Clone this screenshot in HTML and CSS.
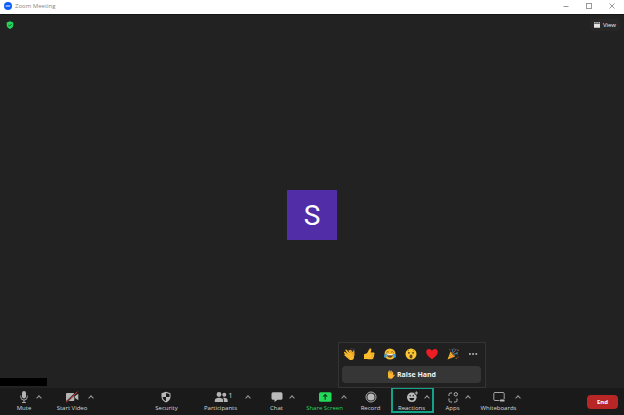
FILE: index.html
```html
<!DOCTYPE html>
<html lang="en">
<head>
<meta charset="utf-8">
<title>Zoom Meeting</title>
<link rel="stylesheet" href="styles.css">
</head>
<body>
<header class="titlebar">
  <svg class="logo" viewBox="0 0 8 8"><circle cx="4" cy="4" r="4" fill="#0b5cff"/><rect x="1.5" y="3.2" width="5" height="1.5" rx=".6" fill="#a9c5ff"/></svg>
  <h1 class="title">Zoom Meeting</h1>
  <div class="window-controls">
    <button aria-label="Minimize"><svg viewBox="0 0 8 8"><path d="M1.5 4.5h5"/></svg></button>
    <button aria-label="Maximize"><svg viewBox="0 0 8 8"><rect x="1.5" y="1.5" width="5" height="5"/></svg></button>
    <button aria-label="Close"><svg viewBox="0 0 8 8"><path d="M1.5 1.5l5 5M6.500 1.500l-5 5"/></svg></button>
  </div>
</header>
<main class="stage">
  <div class="stage-top">
    <svg class="shield" viewBox="0 0 8 8"><path d="M4 .3L7.300 1.400V4C7.300 6 5.800 7.200 4 7.900 2.200 7.200.7 6 .7 4V1.400z" fill="#23d959"/><path d="M2.300 4l1.200 1.200 2.200-2.300" fill="none" stroke="#173d22" stroke-width=".9"/></svg>
    <button class="view"><svg viewBox="0 0 6 6"><path d="M0 .3h1.600v1.300H0zM2.200.3h1.600v1.300H2.200zM4.400.3H6v1.300H4.400zM0 2.100h6v3.600H0z" fill="#e4e4e4"/></svg>View</button>
  </div>
  <div class="avatar">S</div>
  <div class="name-tag"></div>
</main>
<footer class="toolbar">
  <div class="group">
    <div class="item w48"><button class="tool"><svg viewBox="0 0 14 12"><rect x="5" y="0" width="4" height="7.500" rx="2" fill="#b4b4b4"/><path d="M3.700 4.500v1.300a3.300 3.300 0 0 0 6.600 0V4.500M7 9v2.500M5 11.500h4" fill="none" stroke="#b4b4b4" stroke-width=".9"/></svg>Mute</button><button class="caret near" aria-label="Audio options"></button></div>
    <div class="item w48"><button class="tool"><svg viewBox="0 0 14 12"><rect x="1" y="2" width="8.300" height="8" rx="1" fill="#b4b4b4"/><path d="M10 5l3.300-2.300v6.600L10 7z" fill="#b4b4b4"/><path d="M1 11.300L12.500.7" stroke="#1a1a1a" stroke-width="1.600"/><path d="M1 11.300L12.500.7" stroke="#e0443e" stroke-width=".9"/></svg>Start Video</button><button class="caret far" aria-label="Video options"></button></div>
  </div>
  <div class="group">
    <div class="item w50"><button class="tool"><svg viewBox="0 0 14 12"><path d="M7 .7l4.500 1.600v3.500c0 2.700-2 4.600-4.500 5.700-2.500-1.100-4.500-3-4.500-5.700V2.300z" fill="#b9b9b9"/><path d="M7 2v4h3.500V3.100zM7 6v4.300C5.200 9.300 3.700 7.900 3.500 6z" fill="#1a1a1a"/></svg>Security</button></div>
    <div class="item w58"><button class="tool"><svg viewBox="0 0 14 12"><circle cx="5" cy="3.500" r="2.400" fill="#b4b4b4"/><path d="M.8 11V9.500C.8 7.500 2.500 6.700 5 6.700s4.200.8 4.200 2.800V11z" fill="#b4b4b4"/><circle cx="10.300" cy="3.800" r="2" fill="#b4b4b4"/><path d="M9 6.800c2.600-.4 4.700.4 4.700 2.700V11H10V9.500C10 8.300 9.700 7.400 9 6.800z" fill="#b4b4b4"/></svg>Participants</button><span class="count">1</span><button class="caret wide" aria-label="Participant options"></button></div>
    <div class="item w54"><button class="tool"><svg viewBox="0 0 14 12"><path d="M3 1.300h8a1.500 1.500 0 0 1 1.500 1.500v4.400A1.500 1.500 0 0 1 11 8.700H7.500L4.500 11V8.700H3a1.500 1.500 0 0 1-1.500-1.500V2.800A1.500 1.500 0 0 1 3 1.300z" fill="#b9b9b9"/></svg>Chat</button><button class="caret near" aria-label="Chat options"></button></div>
    <div class="item w42"><button class="tool share"><svg viewBox="0 0 14 12"><rect x="1" y="1.300" width="12.500" height="9.500" rx="1.500" fill="#23d959"/><path d="M7.200 8.800V4M5.200 5.700l2-2 2 2" fill="none" stroke="#153b1e" stroke-width="1.200"/></svg>Share Screen</button><button class="caret far" aria-label="Share options"></button></div>
    <div class="item w50"><button class="tool"><svg viewBox="0 0 14 12"><circle cx="7" cy="6" r="5" fill="none" stroke="#b9b9b9" stroke-width=".9"/><circle cx="7" cy="6" r="3.600" fill="#b9b9b9"/></svg>Record</button></div>
    <div class="item w32"><button class="tool"><svg viewBox="0 0 14 12"><circle cx="6.800" cy="6.300" r="4.800" fill="#b9b9b9"/><path d="M4.300 7h5a2.500 2.500 0 0 1-5 0z" fill="#1a1a1a"/><circle cx="5.200" cy="4.800" r=".7" fill="#1a1a1a"/><circle cx="8.300" cy="4.800" r=".7" fill="#1a1a1a"/><circle cx="11.300" cy="2" r="2.100" fill="#1a1a1a"/><path d="M11.300.3v3.400M9.600 2H13" stroke="#b9b9b9" stroke-width=".9"/></svg>Reactions</button><button class="caret near" aria-label="Reaction options"></button>
      <div class="highlight"></div>
      <section class="popup" aria-label="Reactions">
        <div class="emojis">
          <button aria-label="Clap"><svg viewBox="0 0 12 12"><path d="M1 4.200c.5-.7 1.100-.3 1.500.1L4.700 6 2.400 2.500c-.4-.8.5-1.500 1.200-.7l3.200 3.500-1.300-2.500c-.3-.9.700-1.200 1.200-.5l3.500 4.500c1.700 2.300.7 4.700-1.400 5.100-1.700.3-3-.5-4-1.700L1.500 7.600c-.5-.7.1-1.300.8-.9L1.200 5.300C.9 4.900.7 4.600 1 4.200z" fill="#f8b92d"/><path d="M6.500 1.900l1.300-.2 2.300 2.500.1-1.700c.3-.7 1.200-.3 1.200.4l.2 4.300-1 1.700-.8-2z" fill="#f0a52a"/><path d="M3.500 5l2.400 2.300" stroke="#d88d20" stroke-width=".4"/><path d="M8.200 1.300l.2-1M9.500 1.500l.8-1M10.800 2l1-.5" stroke="#66717a" stroke-width=".6"/></svg></button>
          <button aria-label="Thumbs up"><svg viewBox="0 0 12 12"><path d="M1 6.300l3-1L6.400.9C7.400-.1 8.700.8 8.300 2L7.700 4.500h2.800c1.300 0 1.300 1.500.4 1.800.8.400.6 1.500-.2 1.700.6.500.3 1.500-.4 1.600.3.900-.2 1.500-1 1.600-1.800.3-3.800.200-5.300-.3H1z" fill="#fcbd2d"/><path d="M7.800 6.300h3M8 8h2.600M8 9.700h2.200" stroke="#db9225" stroke-width=".5"/></svg></button>
          <button aria-label="Tears of joy"><svg viewBox="0 0 12 12"><circle cx="6" cy="6" r="5.500" fill="#fbc02d"/><path d="M2.800 6h6.400c0 2.200-1.300 3.700-3.200 3.700S2.800 8.200 2.800 6z" fill="#66402a"/><path d="M3.200 6.100h5.600v1.200H3.200z" fill="#fff"/><path d="M2.400 4.500l1.300-1 1.200.8M7.100 4.300l1.200-.8 1.300 1" fill="none" stroke="#6b4521" stroke-width=".7"/><path d="M2.800 5.400C1.300 5.500 0 6.700 0 8.200c0 2 2.300 1.900 2.600.2zM9.200 5.400c1.500.1 2.800 1.300 2.800 2.800 0 2-2.300 1.900-2.600.2z" fill="#3f9fdb"/></svg></button>
          <button aria-label="Surprised"><svg viewBox="0 0 12 12"><circle cx="6" cy="6" r="5.500" fill="#fbc530"/><ellipse cx="6" cy="8.500" rx="1.500" ry="2" fill="#62402d"/><circle cx="3.900" cy="4.800" r=".9" fill="#4d3528"/><circle cx="8.100" cy="4.800" r=".9" fill="#4d3528"/><path d="M2.700 2.800l1.300-.7M8 2.100l1.300.7" stroke="#8b5f25" stroke-width=".6"/></svg></button>
          <button aria-label="Heart"><svg viewBox="0 0 12 12"><path d="M6 11.200C3 8.800.2 6.600.2 3.900.2.800 4 0 6 2.700 8 0 11.800.8 11.800 3.900c0 2.700-2.800 4.900-5.800 7.300z" fill="#ee1d23"/></svg></button>
          <button aria-label="Celebrate"><svg viewBox="0 0 12 12"><path d="M.5 11.500L3.600 3.500C5 4.500 7.200 6.700 8 8.400z" fill="#f5b52c"/><path d="M3.600 3.500C5.500 4 7.700 6.500 8 8.400 6 8 4 5.500 3.600 3.500z" fill="#8b5a24"/><path d="M2 8l2.500 2M2.800 6l3.500 3.200" stroke="#d8632b" stroke-width=".6"/><path d="M5 4.500C6.300 3.500 5.800 2 4.800 1M7 6.500c1.300-1.300 2.700-1 4-.3" fill="none" stroke="#3d9ccb" stroke-width=".9"/><path d="M6.500 5c.3-2 2.500-1.500 2.500-4" fill="none" stroke="#b44b9d" stroke-width=".9"/><path d="M2.300 1.200h1v1h-1zM10.500 8.500h1v1h-1z" fill="#d7443e"/><path d="M6.500.5h1v1h-1zM9.500 4h1v1h-1z" fill="#5ca653"/><path d="M10.500 1.700h1v1h-1zM8.700 9.800h1v1h-1z" fill="#dba235"/></svg></button>
          <button aria-label="More reactions"><svg viewBox="0 0 12 12"><path d="M2 5.200h1.800v1.500H2zM5.200 5.200H7v1.500H5.200zM8.400 5.200h1.800v1.500H8.400z" fill="#c8c8c8"/></svg></button>
        </div>
        <button class="raise"><svg viewBox="0 0 9 9"><path d="M2 5V1.700c0-.7.900-.7 1 0L3.200 4V.9c0-.8 1-.8 1.100 0L4.500 4l.2-2.900c.1-.8 1.100-.7 1.100.1v3l.3-2c.2-.7 1-.6 1 .2V5.500l.7-.8c.5-.5 1.200 0 .8.700L7.300 7C6.800 8.200 6 8.800 4.600 8.800 2.800 8.800 2 7.800 2 6.500z" fill="#fcb52e"/></svg>Raise Hand</button>
      </section>
    </div>
    <div class="item w50"><button class="tool"><svg viewBox="0 0 14 12"><path d="M3 5V3.500A1.500 1.500 0 0 1 4.500 2H6M3 7.500V9.500A1.500 1.500 0 0 0 4.500 11H6M8 11h1.500A1.500 1.500 0 0 0 11 9.500V7.500" fill="none" stroke="#b4b4b4" stroke-width="1"/><circle cx="9.800" cy="3.300" r="1.700" fill="none" stroke="#b4b4b4" stroke-width="1"/></svg>Apps</button><button class="caret near" aria-label="App options"></button></div>
    <div class="item w42"><button class="tool"><svg viewBox="0 0 14 12"><path d="M7.500 9.500H3A1.200 1.200 0 0 1 1.800 8.300V2.700A1.200 1.200 0 0 1 3 1.500h8a1.200 1.200 0 0 1 1.200 1.200V8" fill="none" stroke="#b4b4b4" stroke-width=".9"/><rect x="8" y="8.500" width="4.500" height="2" rx=".5" fill="#b9b9b9"/></svg>Whiteboards</button><button class="caret far" aria-label="Whiteboard options"></button></div>
  </div>
  <div class="group end-group"><button class="end">End</button></div>
</footer>
</body>
</html>
```
FILE: styles.css
```css
* { box-sizing: border-box; }

body {
  margin: 0;
  min-height: 100vh;
  display: flex;
  flex-direction: column;
  background: #222;
  color: #d8d8d8;
  font-family: "Open Sans", "Noto Sans", sans-serif;
  font-size: 6px;
  line-height: 8px;
}

button {
  margin: 0;
  padding: 0;
  border: 0;
  background: none;
  color: inherit;
  font: inherit;
}

svg { display: block; flex: none; }

.titlebar {
  display: flex;
  align-items: center;
  gap: 3px;
  height: 14px;
  padding: 0 8px 2px 4px;
  background: #fff;
  box-shadow: 0 1px 0 #151515;
}
.logo { width: 8px; height: 8px; }
.title {
  margin: 0;
  color: #888;
  font-size: 6px;
  font-weight: 400;
}
.window-controls {
  display: flex;
  gap: 15px;
  margin-left: auto;
}
.window-controls svg {
  width: 8px;
  height: 8px;
  fill: none;
  stroke: #999;
  stroke-width: 1;
}

.stage {
  position: relative;
  flex: 1;
  display: grid;
  place-items: center;
}
.stage-top {
  position: absolute;
  inset: 5px 4px auto 6px;
  display: flex;
  align-items: center;
  justify-content: space-between;
}
.shield { width: 8px; height: 8px; }
.view {
  display: flex;
  align-items: center;
  gap: 3px;
  padding: 2px 4px;
  border-radius: 3px;
  background: #272727;
  color: #eee;
}
.view svg { width: 6px; height: 6px; }
.avatar {
  display: grid;
  place-items: center;
  width: 50px;
  height: 50px;
  margin-top: 28px;
  padding-top: 2px;
  background: #512da8;
  color: #fff;
  font-family: Roboto, sans-serif;
  font-size: 28px;
}
.name-tag {
  position: absolute;
  left: 0;
  bottom: 2px;
  width: 47px;
  height: 8px;
  background: #000;
}

.toolbar {
  display: flex;
  justify-content: space-between;
  height: 27px;
  background: #1a1a1a;
}
.group { display: flex; }
.item {
  position: relative;
  display: flex;
  justify-content: center;
}
.w32 { width: 32px; }
.w42 { width: 42px; }
.w48 { width: 48px; }
.w50 { width: 50px; }
.w54 { width: 54px; }
.w58 { width: 58px; }
.tool {
  display: flex;
  flex-direction: column;
  align-items: center;
  gap: 1px;
  padding-top: 3px;
  white-space: nowrap;
}
.tool svg { width: 14px; height: 12px; }
.share { color: #23d959; }
.count {
  position: absolute;
  top: 4px;
  left: calc(50% + 8px);
  font-size: 7px;
}
.caret {
  position: absolute;
  top: 6px;
  width: 6px;
  height: 6px;
}
.caret::before {
  content: "";
  display: block;
  width: 3px;
  height: 3px;
  margin: 2px auto 0;
  border: solid #999;
  border-width: 1px 0 0 1px;
  transform: rotate(45deg);
}
.near { left: calc(50% + 12px); }
.far { left: calc(50% + 16px); }
.wide { left: calc(50% + 24px); }
.highlight {
  position: absolute;
  inset: -1px -6px 2px -5px;
  border: 2px solid #12a388;
  pointer-events: none;
}

.popup {
  position: absolute;
  bottom: 100%;
  left: 50%;
  width: 148px;
  margin-left: -74px;
  padding: 5px 4px 4px 3px;
  border: 1px solid #343434;
  background: #202020;
}
.emojis {
  display: flex;
  justify-content: space-between;
  padding: 0 1px;
}
.emojis svg { width: 12px; height: 12px; }
.raise {
  display: flex;
  align-items: center;
  justify-content: center;
  gap: 2px;
  width: 100%;
  height: 17px;
  margin-top: 6px;
  border-radius: 4px;
  background: #363636;
  color: #f2f2f2;
  font-size: 7px;
  font-weight: 700;
}
.raise svg { width: 9px; height: 9px; }

.end-group {
  justify-content: flex-end;
  align-items: center;
  width: 59px;
  padding-right: 6px;
}
.end {
  width: 31px;
  height: 14px;
  border-radius: 4px;
  background: #b92626;
  color: #fff;
  font-weight: 700;
}
```
